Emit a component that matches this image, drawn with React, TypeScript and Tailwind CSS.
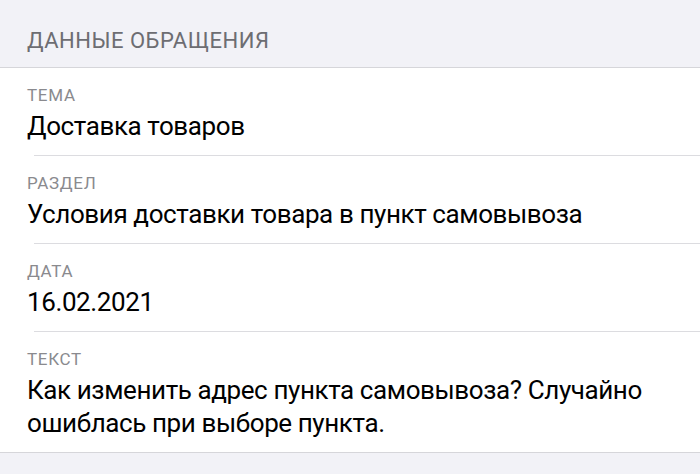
import React from "react";

const rows: { label: string; value: string }[] = [
  { label: "ТЕМА", value: "Доставка товаров" },
  { label: "РАЗДЕЛ", value: "Условия доставки товара в пункт самовывоза" },
  { label: "ДАТА", value: "16.02.2021" },
  { label: "ТЕКСТ", value: "Как изменить адрес пункта самовывоза? Случайно ошиблась при выборе пункта." },
];

export default function App() {
  return (
    <div
      className="w-[700px] h-[474px] bg-[#f2f2f7] overflow-hidden"
      style={{ fontFamily: "Roboto, 'Noto Sans', sans-serif" }}
    >
      <div className="h-[68px] box-border border-b border-[#d6d6da] flex items-end px-[27px] pb-[12px]">
        <span className="text-[22px] leading-[28px] text-[#6d6d72] tracking-[0.5px]">ДАННЫЕ ОБРАЩЕНИЯ</span>
      </div>
      <div className="bg-white border-b border-[#d6d6da]">
        {rows.map((r, i) => (
          <div key={r.label}>
            <div className="px-[27px] pt-[17px] pb-[12px]">
              <div className="text-[17px] leading-[20px] text-[#8a8a8e] tracking-[0.7px]">{r.label}</div>
              <div className="mt-[5px] text-[26px] leading-[33px] text-black tracking-[-0.4px] pr-[20px]">{r.value}</div>
            </div>
            {i < rows.length - 1 && <div className="ml-[34px] h-px bg-[#dcdce0]" />}
          </div>
        ))}
      </div>
    </div>
  );
}
